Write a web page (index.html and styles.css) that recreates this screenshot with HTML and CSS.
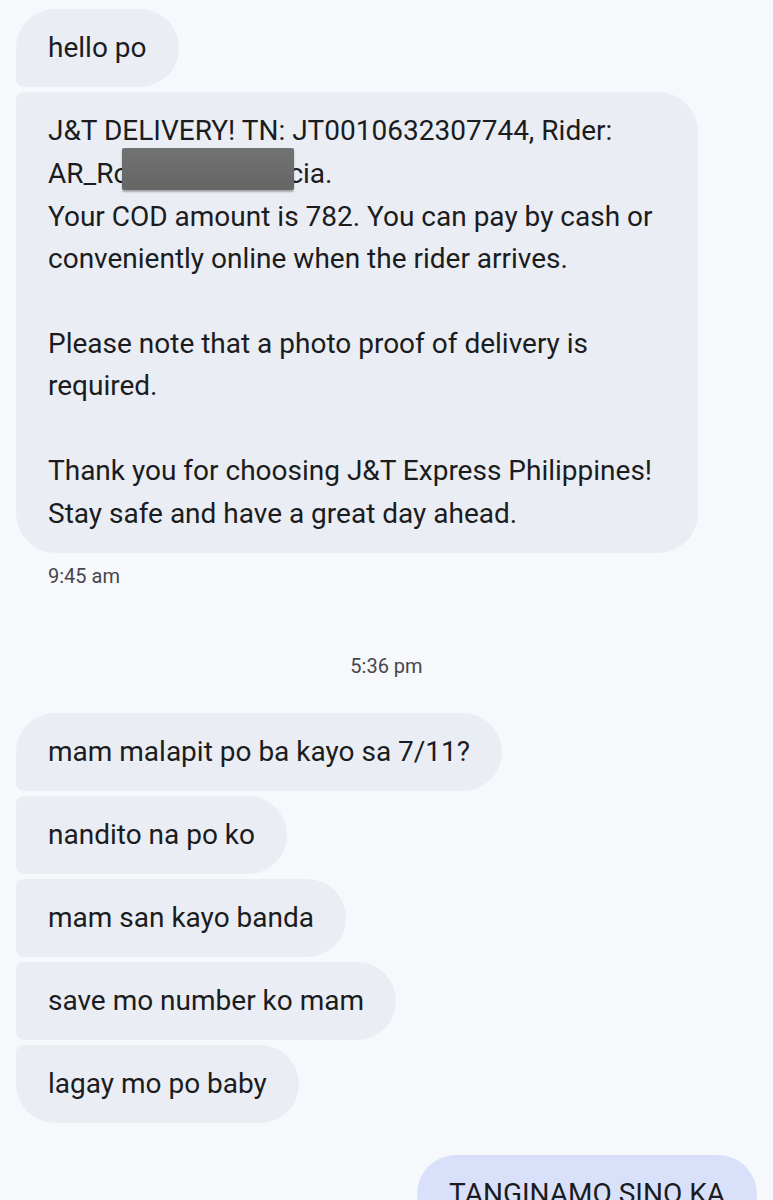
FILE: index.html
```html
<!DOCTYPE html>
<html lang="en">

<head>
    <meta charset="UTF-8">
    <meta name="viewport" content="width=device-width, initial-scale=1.0">
    <title>Messages</title>

    <link rel="stylesheet" href="styles.css">
</head>

<body>
    <div class="thread">
        <!-- 第一組：收到的訊息 -->
        <div class="group incoming">
            <div class="bubble">hello po</div>
            <div class="bubble wide">
                J&amp;T DELIVERY! TN: JT0010632307744, Rider:<br>
                AR_Ro<span class="redact"></span>cia.<br>
                Your COD amount is 782. You can pay by cash or conveniently online when the rider arrives.<br>
                <br>
                Please note that a photo proof of delivery is required.<br>
                <br>
                Thank you for choosing J&amp;T Express Philippines! Stay safe and have a great day ahead.
            </div>
        </div>
        <div class="time">9:45 am</div>

        <div class="time center">5:36 pm</div>

        <!-- 第二組 -->
        <div class="group incoming">
            <div class="bubble">mam malapit po ba kayo sa 7/11?</div>
            <div class="bubble">nandito na po ko</div>
            <div class="bubble">mam san kayo banda</div>
            <div class="bubble">save mo number ko mam</div>
            <div class="bubble">lagay mo po baby</div>
        </div>

        <!-- 自己送出的 -->
        <div class="group outgoing">
            <div class="bubble">TANGINAMO SINO KA</div>
        </div>
    </div>
</body>

</html>
```

FILE: styles.css
```css
body {
    margin: 0;
    background: #f7f8fc;
    font-family: Roboto, "Noto Sans", sans-serif;
    color: #1b1c20;
}

.thread {
    display: flex;
    flex-direction: column;
    padding: 9px 16px;
}

.group {
    display: flex;
    flex-direction: column;
    gap: 5px;
}

.incoming {
    align-items: flex-start;
}

.outgoing {
    align-items: flex-end;
    margin-top: 32px;
}

.bubble {
    max-width: 618px;
    padding: 18px 32px;
    font-size: 28px;
    line-height: 42px;
    background: #eaedf4;
    border-radius: 8px 40px 40px 8px;
}

/* 第一個泡泡左上圓角、最後一個左下圓角 */
.incoming .bubble:first-child {
    border-top-left-radius: 40px;
}

.incoming .bubble:last-child {
    border-bottom-left-radius: 40px;
}

.outgoing .bubble {
    background: #d9e1fa;
    border-radius: 40px;
}

.wide {
    width: 618px;
    line-height: 42.4px;
}

/* 打碼的色塊：不撐高行高，用 top 往上推 */
.redact {
    position: relative;
    top: -4px;
    z-index: 1;
    display: inline-block;
    width: 172px;
    height: 42px;
    margin: 0 -6px 0 -7px;
    vertical-align: -11px;
    background: linear-gradient(#727272, #656565);
    border-radius: 2px;
    box-shadow: 0 2px 2px rgba(0, 0, 0, 0.3);
}

.time {
    margin: 11px 0 0 32px;
    font-size: 20px;
    line-height: 24px;
    color: #46474c;
}

.time.center {
    margin: 66px 0 35px;
    text-align: center;
}
```
